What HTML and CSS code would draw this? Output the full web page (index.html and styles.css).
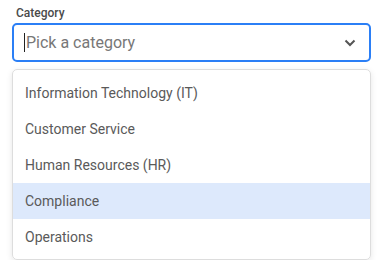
FILE: index.html
```html
<!DOCTYPE html>
<html>
<head>
  <meta charset="UTF-8"/>
  <title>Category select</title>
  <link rel="stylesheet" href="styles.css">
</head>
<body>
<div class="field">
  <label class="field-label">Category</label>
  <div class="select">
    <span class="caret"></span><span class="placeholder">Pick a category</span>
    <svg class="chevron" width="12" height="8" viewBox="0 0 12 8"><path d="M1.5 1.5 L6 6 L10.5 1.5" fill="none" stroke="#555" stroke-width="2"/></svg>
  </div>
  <ul class="menu">
    <li class="option">Information Technology (IT)</li>
    <li class="option">Customer Service</li>
    <li class="option">Human Resources (HR)</li>
    <li class="option active">Compliance</li>
    <li class="option">Operations</li>
  </ul>
</div>
</body>
</html>
```

FILE: styles.css
```css
* { padding : 0; margin : 0; list-style : none; box-sizing : border-box; }

body { font-family : Roboto, "Liberation Sans", sans-serif; background : #fff; color : #555; }

.field { padding : 5px 7px 0 12px; }

.field-label { display : block; font-size : 12px; line-height : 16px; font-weight : 500; color : #4a4a4a; margin : 0 0 2px 4px; }

.select { height : 39px; border : 2px solid #2b7ff6; border-radius : 5px; display : flex; align-items : center; padding : 0 13px 0 10px; }
.caret { width : 1px; height : 19px; background : #222; margin-right : 1px; }
.placeholder { flex : 1; font-size : 16px; color : #777; }
.chevron { display : block; }

.menu { margin-top : 7px; border : 1px solid #ddd; border-radius : 5px; padding : 5px 0 4px; box-shadow : 0 2px 6px rgba(0,0,0,0.10); }
.option { height : 36px; line-height : 36px; padding-left : 12px; font-size : 14px; color : #5a5a5a; }
.option.active { background : #dde9fc; }
```
